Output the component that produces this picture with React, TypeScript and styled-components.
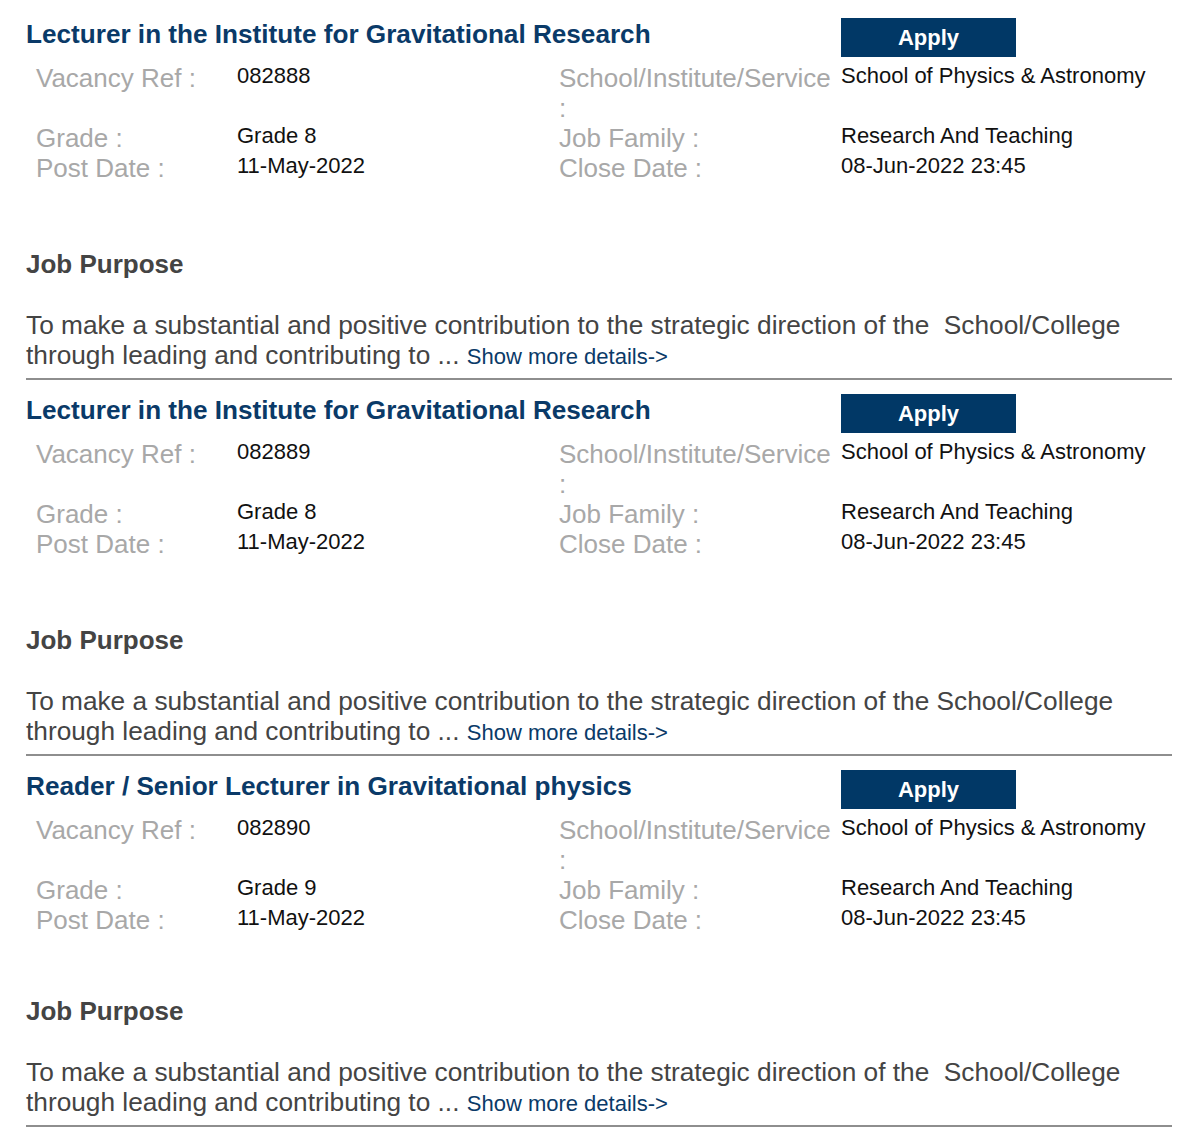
import React from "react";
import styled, {createGlobalStyle} from "styled-components";

const GlobalStyle = createGlobalStyle`
    html, body {
        margin: 0;
        padding: 0;
        background: #ffffff;
    }
    body {
        font-family: "Liberation Sans", Arial, sans-serif;
    }
`;

type Job = {
    title: string;
    ref: string;
    grade: string;
    postDate: string;
    school: string;
    family: string;
    closeDate: string;
    purpose: string;
    gap: number;
};

const jobs: Job[] = [
    {
        title: "Lecturer in the Institute for Gravitational Research",
        ref: "082888",
        grade: "Grade 8",
        postDate: "11-May-2022",
        school: "School of Physics & Astronomy",
        family: "Research And Teaching",
        closeDate: "08-Jun-2022 23:45",
        purpose: "To make a substantial and positive contribution to the strategic direction of the\u00a0 School/College through leading and contributing to ...",
        gap: 66,
    },
    {
        title: "Lecturer in the Institute for Gravitational Research",
        ref: "082889",
        grade: "Grade 8",
        postDate: "11-May-2022",
        school: "School of Physics & Astronomy",
        family: "Research And Teaching",
        closeDate: "08-Jun-2022 23:45",
        purpose: "To make a substantial and positive contribution to the strategic direction of the School/College through leading and contributing to ...",
        gap: 66,
    },
    {
        title: "Reader / Senior Lecturer in Gravitational physics",
        ref: "082890",
        grade: "Grade 9",
        postDate: "11-May-2022",
        school: "School of Physics & Astronomy",
        family: "Research And Teaching",
        closeDate: "08-Jun-2022 23:45",
        purpose: "To make a substantial and positive contribution to the strategic direction of the\u00a0 School/College through leading and contributing to ...",
        gap: 61,
    },
];

const Page = styled.div`
    width: 1146px;
    padding: 4px 0 0 26px;
`;

const JobItem = styled.section`
    padding-top: 14px;
    border-bottom: 2px solid #8e8e8e;
`;

const HeaderRow = styled.div`
    display: grid;
    grid-template-columns: 815px 175px;
    align-items: start;
    height: 39px;
`;

const JobTitle = styled.h2`
    margin: 0;
    padding-top: 1px;
    font-size: 26.15px;
    line-height: 30px;
    font-weight: bold;
    color: #0a3a68;
`;

const ApplyButton = styled.button`
    width: 175px;
    height: 39px;
    padding: 0;
    border: none;
    background: #013866;
    color: #ffffff;
    font-family: "Liberation Sans", Arial, sans-serif;
    font-size: 22px;
    font-weight: bold;
    line-height: 39px;
    text-align: center;
    cursor: pointer;
`;

const Details = styled.div`
    display: grid;
    grid-template-columns: 201px 322px 282px 1fr;
    align-items: start;
    margin: 6px 0 0 10px;
`;

const Label = styled.div`
    font-size: 26px;
    line-height: 30px;
    color: #a8a8a8;
`;

const Value = styled.div`
    font-size: 22px;
    line-height: normal;
    color: #111111;
`;

const PurposeHeading = styled.h3<{ $gap: number }>`
    margin: ${(p) => p.$gap}px 0 0 0;
    font-size: 26px;
    line-height: 30px;
    font-weight: bold;
    color: #444444;
`;

const PurposeText = styled.p`
    margin: 31px 0 0 0;
    padding-bottom: 8px;
    font-size: 26.25px;
    line-height: 30px;
    color: #444444;
`;

const MoreLink = styled.a`
    font-size: 22px;
    line-height: 20px;
    color: #0a3a68;
    text-decoration: none;
    cursor: pointer;
`;

function JobCard({job}: { job: Job }) {
    return (
        <JobItem>
            <HeaderRow>
                <JobTitle>{job.title}</JobTitle>
                <ApplyButton>Apply</ApplyButton>
            </HeaderRow>
            <Details>
                <Label>Vacancy Ref :</Label>
                <Value>{job.ref}</Value>
                <Label>School/Institute/Service :</Label>
                <Value>{job.school}</Value>

                <Label>Grade :</Label>
                <Value>{job.grade}</Value>
                <Label>Job Family :</Label>
                <Value>{job.family}</Value>

                <Label>Post Date :</Label>
                <Value>{job.postDate}</Value>
                <Label>Close Date :</Label>
                <Value>{job.closeDate}</Value>
            </Details>
            <PurposeHeading $gap={job.gap}>Job Purpose</PurposeHeading>
            <PurposeText>
                {job.purpose} <MoreLink>Show more details-&gt;</MoreLink>
            </PurposeText>
        </JobItem>
    );
}

export default function App() {
    return (
        <>
            <GlobalStyle/>
            <Page>
                {jobs.map((job) => (
                    <JobCard key={job.ref} job={job}/>
                ))}
            </Page>
        </>
    );
}
